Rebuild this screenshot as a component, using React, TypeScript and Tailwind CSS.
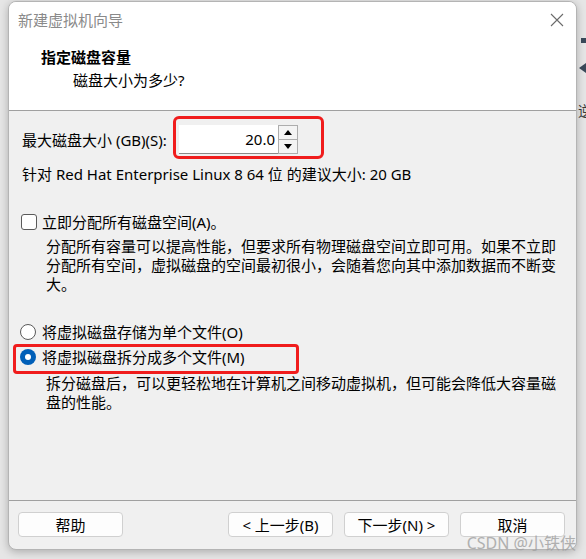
import React, { useState } from 'react';

const Button: React.FC<{ label: string }> = ({ label }) => (
  <button className="w-[105px] h-[25px] rounded-[4px] border border-[#d0d0d0] bg-[#fdfdfd] text-[15px] leading-[20px] text-black flex items-center justify-center">
    {label}
  </button>
);

const App: React.FC = () => {
  const [size, setSize] = useState('20.0');
  const [split, setSplit] = useState(true);
  const [allocate, setAllocate] = useState(false);

  return (
    <div className="relative w-[586px] h-[559px] bg-[#e6e6e6] flex font-['Noto_Sans','Noto_Sans_CJK_SC',sans-serif] text-black overflow-hidden">
      <div className="w-[8px] shrink-0" />

      {/* dialog window */}
      <div className="relative mt-[1px] w-[569px] h-[549px] shrink-0 flex flex-col rounded-[8px] border border-[#b4b4b4] bg-[#f0f0f0] shadow-[0_2px_8px_rgba(0,0,0,0.25)] overflow-hidden">
        <div className="bg-white border-b border-[#a0a0a0] h-[109px] flex flex-col">
          <div className="flex items-center justify-between pl-[9px] pr-[12px] pt-[8px]">
            <span className="text-[15px] leading-[20px] text-[#8a8a8a]">新建虚拟机向导</span>
            <svg width="14" height="14" viewBox="0 0 14 14" className="text-[#6b6b6b]">
              <path d="M1 1 L13 13 M13 1 L1 13" stroke="currentColor" strokeWidth="1.1" fill="none" />
            </svg>
          </div>
          <div className="pl-[32px] pt-[17px] text-[15px] leading-[20px] font-bold">指定磁盘容量</div>
          <div className="pl-[64px] pt-[3px] text-[15px] leading-[20px]">磁盘大小为多少?</div>
        </div>

        <div className="flex-1 flex flex-col pl-[13px] pr-[14px] text-[15px]">
          <div className="flex items-center mt-[14px] h-[29px]">
            <span className="w-[151px] leading-[20px] whitespace-nowrap">最大磁盘大小 (GB)(S):</span>
            <div className="ml-[6px] flex h-[29px]">
              <input
                value={size}
                onChange={(e) => setSize(e.target.value)}
                className="w-[99px] h-[29px] bg-white border-b border-[#8a8a8a] text-right pr-[3px] text-[15px] outline-none"
              />
              <div className="w-[20px] h-[29px] flex flex-col border border-[#adadad] bg-[#f4f4f4]">
                <div className="flex-1 flex items-center justify-center border-b border-[#adadad]">
                  <svg width="8" height="5" viewBox="0 0 8 5"><path d="M0 5 L4 0 L8 5 Z" fill="#000" /></svg>
                </div>
                <div className="flex-1 flex items-center justify-center">
                  <svg width="8" height="5" viewBox="0 0 8 5"><path d="M0 0 L4 5 L8 0 Z" fill="#000" /></svg>
                </div>
              </div>
            </div>
          </div>

          <div className="mt-[10px] leading-[20px]">针对 Red Hat Enterprise Linux 8 64 位 的建议大小: 20 GB</div>

          <label className="mt-[28px] flex items-center h-[20px] cursor-default">
            <span
              onClick={() => setAllocate(!allocate)}
              className="w-[16px] h-[16px] ml-[-1px] rounded-[3px] border border-[#5a5a5a] bg-white flex items-center justify-center"
            >
              {allocate && (
                <svg width="10" height="10" viewBox="0 0 10 10"><path d="M1 5 L4 8 L9 2" stroke="#000" strokeWidth="1.5" fill="none" /></svg>
              )}
            </span>
            <span className="ml-[5px] leading-[20px]">立即分配所有磁盘空间(A)。</span>
          </label>
          <p className="mt-[5px] pl-[24px] leading-[19px]">
            分配所有容量可以提高性能，但要求所有物理磁盘空间立即可用。如果不立即分配所有空间，虚拟磁盘的空间最初很小，会随着您向其中添加数据而不断变大。
          </p>

          <label className="mt-[28px] flex items-center h-[20px] cursor-default" onClick={() => setSplit(false)}>
            <span className={`w-[16px] h-[16px] ml-[-2px] rounded-full flex items-center justify-center ${split ? 'border border-[#5a5a5a] bg-white' : 'bg-[#005fb8]'}`}>
              {!split && <span className="w-[6px] h-[6px] rounded-full bg-white" />}
            </span>
            <span className="ml-[6px] leading-[20px]">将虚拟磁盘存储为单个文件(O)</span>
          </label>
          <label className="mt-[5px] flex items-center h-[20px] cursor-default" onClick={() => setSplit(true)}>
            <span className={`w-[16px] h-[16px] ml-[-2px] rounded-full flex items-center justify-center ${split ? 'bg-[#005fb8]' : 'border border-[#5a5a5a] bg-white'}`}>
              {split && <span className="w-[6px] h-[6px] rounded-full bg-white" />}
            </span>
            <span className="ml-[6px] leading-[20px]">将虚拟磁盘拆分成多个文件(M)</span>
          </label>
          <p className="mt-[7px] pl-[24px] leading-[19px]">
            拆分磁盘后，可以更轻松地在计算机之间移动虚拟机，但可能会降低大容量磁盘的性能。
          </p>
        </div>

        <div className="border-t border-[#a0a0a0] h-[49px] flex items-start pt-[11px] pl-[9px] pr-[11px]">
          <Button label="帮助" />
          <div className="flex-1" />
          <div className="flex gap-[11px]">
            <Button label="< 上一步(B)" />
            <Button label="下一步(N) >" />
            <Button label="取消" />
          </div>
        </div>

        {/* annotation boxes */}
        <div className="absolute left-[164px] top-[114px] w-[151px] h-[43px] rounded-[6px] border-[3px] border-[#f01c1c] pointer-events-none" />
        <div className="absolute left-[4px] top-[342px] w-[286px] h-[30px] rounded-[4px] border-[3px] border-[#f01c1c] pointer-events-none" />
      </div>

      {/* desktop strip behind the dialog */}
      <div className="flex-1 flex flex-col items-end pt-[38px] text-[#3a3a3a]">
        <div className="w-[5px] h-[5px] bg-[#3a4a5a]" />
        <div className="mt-[20px] w-0 h-0 border-y-[5px] border-y-transparent border-r-[7px] border-r-[#3a4a5a]" />
        <div className="mt-[30px] text-[14px] leading-[16px] w-[8px] overflow-hidden">逆</div>
      </div>

      {/* watermark */}
      <div className="absolute right-[10px] top-[533px] text-[16px] leading-[20px] text-[#a0a0a0] opacity-80 pointer-events-none">CSDN @小铁侠</div>
    </div>
  );
};

export default App;
